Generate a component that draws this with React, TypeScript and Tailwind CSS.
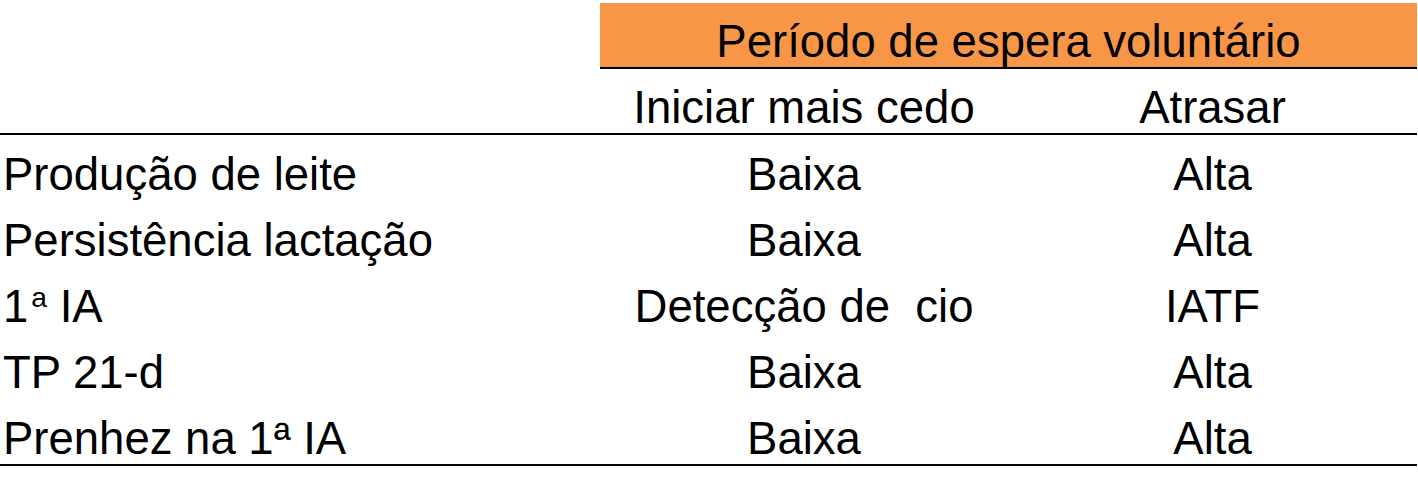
import React from 'react';

interface Row {
    label: React.ReactNode;
    early: string;
    late: string;
}

const rows: Row[] = [
    { label: 'Produção de leite', early: 'Baixa', late: 'Alta' },
    { label: 'Persistência lactação', early: 'Baixa', late: 'Alta' },
    {
        label: (
            <span>
                1<sup className="text-[62%] top-[-0.55em] ml-[3px]">a</sup> IA
            </span>
        ),
        early: 'Detecção de  cio',
        late: 'IATF',
    },
    { label: 'TP 21-d', early: 'Baixa', late: 'Alta' },
    { label: 'Prenhez na 1ª IA', early: 'Baixa', late: 'Alta' },
];

const App: React.FC = () => {
    return (
        <div className="w-[1418px] h-[494px] bg-white text-black pt-[3px] font-['Liberation_Sans',Arial,sans-serif] text-[45.5px] leading-[46px]">
            <div className="w-[1417px]">
                {/* Group header */}
                <div className="grid grid-cols-[600px_1fr]">
                    <div />
                    <div className="h-[66px] bg-[#f79646] border-b-2 border-black pt-[16px] text-center">
                        Período de espera voluntário
                    </div>
                </div>

                {/* Column headers */}
                <div className="grid grid-cols-[600px_408px_1fr] h-[66px] border-b-2 border-black pt-[16px]">
                    <div />
                    <div className="text-center">Iniciar mais cedo</div>
                    <div className="text-center">Atrasar</div>
                </div>

                {/* Body */}
                {rows.map((row, i) => (
                    <div
                        key={i}
                        className={`grid grid-cols-[600px_408px_1fr] pt-[17px] ${
                            i === rows.length - 1 ? 'h-[67px] border-b-2 border-black' : 'h-[66px]'
                        }`}
                    >
                        <div className="pl-[3px] whitespace-nowrap">{row.label}</div>
                        <div className="text-center whitespace-pre">{row.early}</div>
                        <div className="text-center">{row.late}</div>
                    </div>
                ))}
            </div>
        </div>
    );
};

export default App;
